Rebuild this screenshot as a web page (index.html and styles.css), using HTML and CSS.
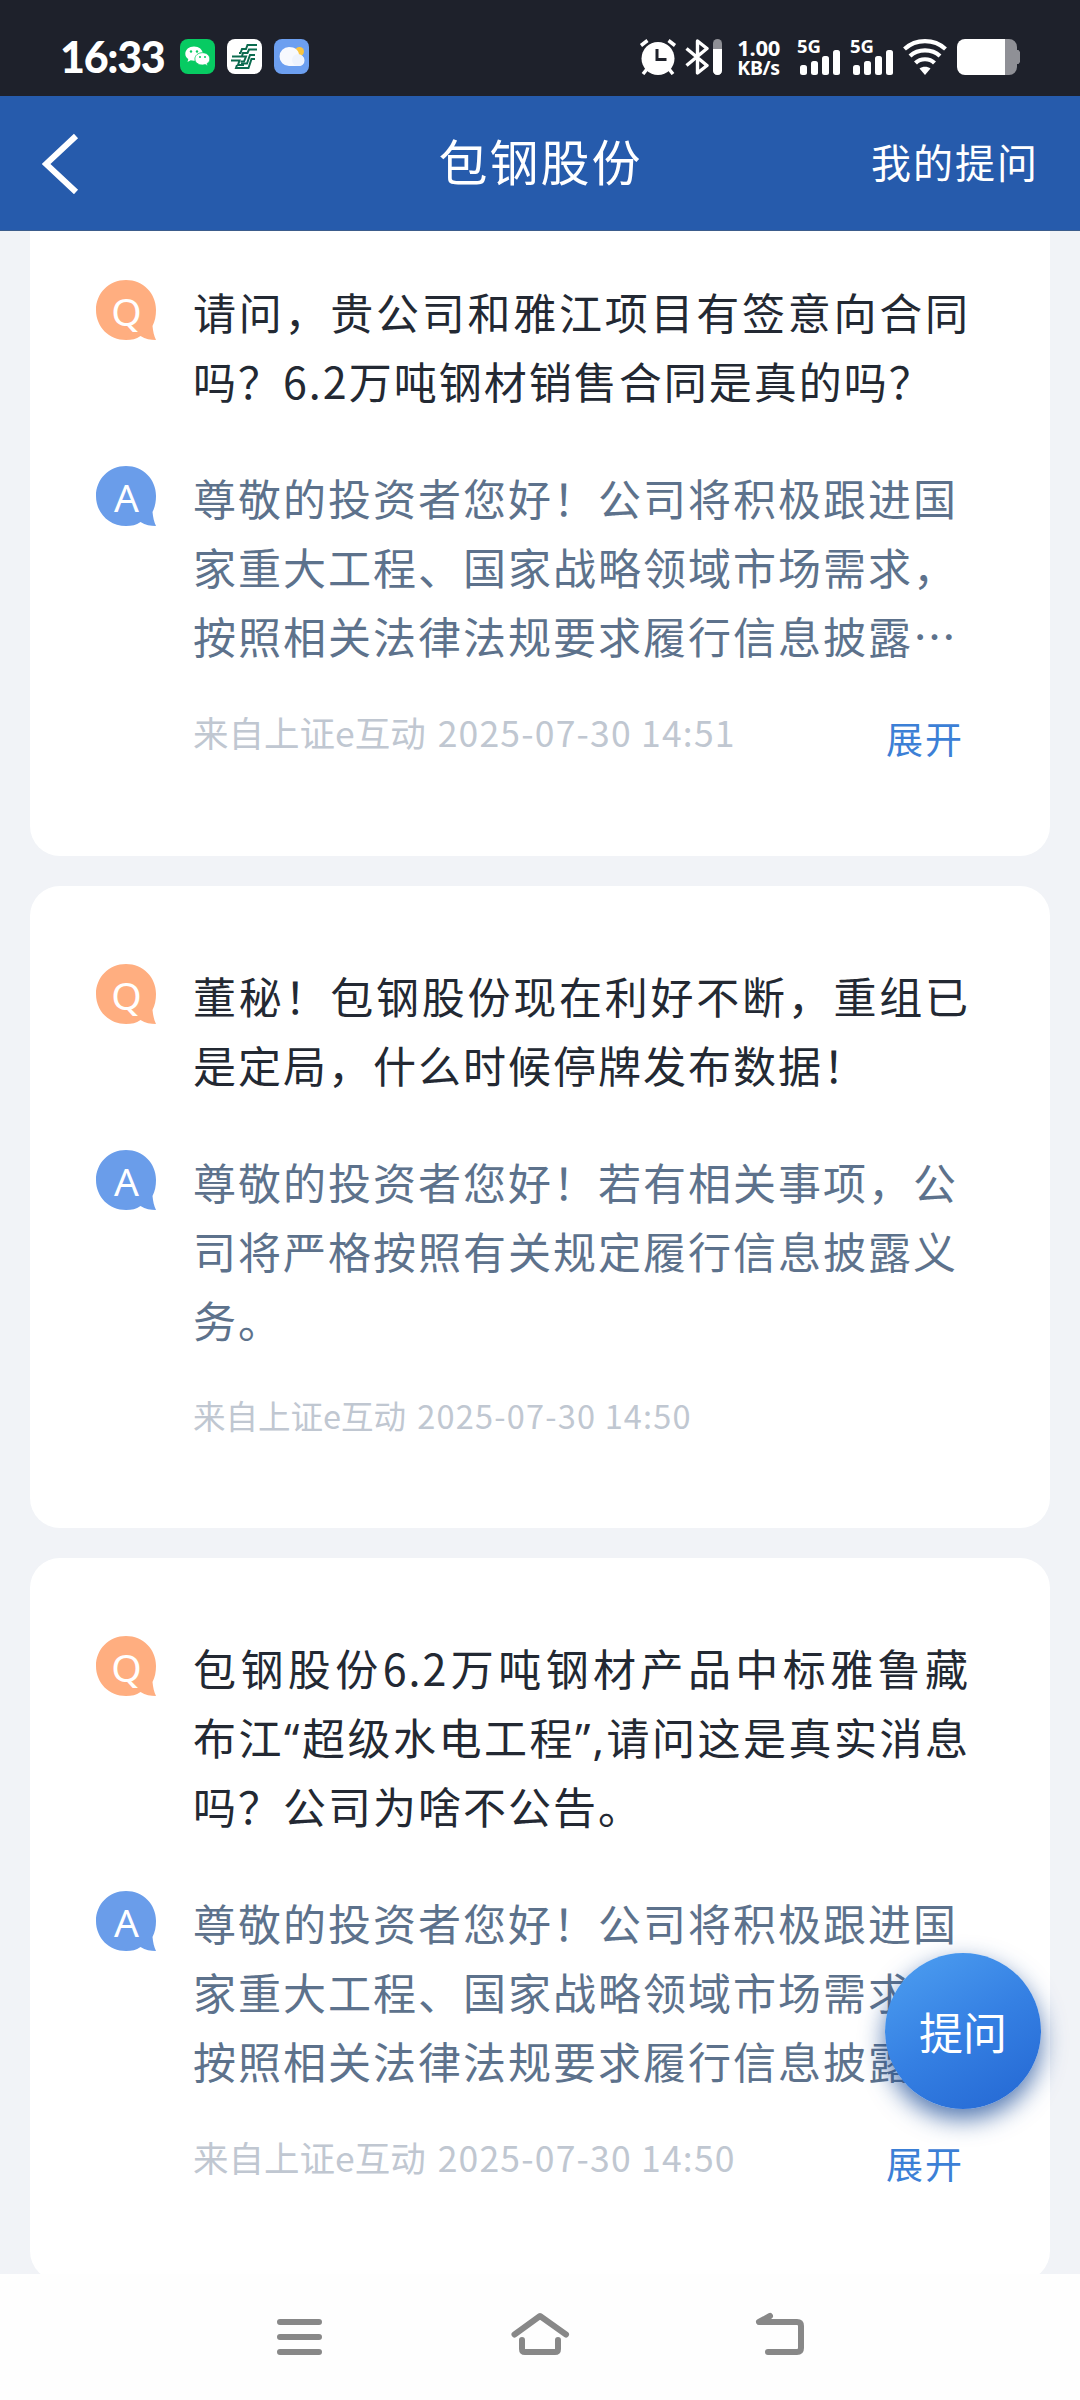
FILE: index.html
```html
<!DOCTYPE html>
<html lang="zh-CN">
<head>
  <meta charset="UTF-8" />
  <meta name="viewport" content="width=device-width, initial-scale=1.0" />
  <title>包钢股份</title>
  <link rel="stylesheet" href="styles.css">
</head>
<body>
  <svg width="0" height="0" class="defs">
    <symbol id="bubble" viewBox="0 0 60 60">
      <path d="M30 0C13 0 0 13 0 30s13 30 30 30c6 0 10-1 14.500-4 5 3 10 4 15.500 4-2-4-3-9-3.500-14 2.500-5 3.500-10 3.500-16C60 13 47 0 30 0z" fill="currentColor"/>
    </symbol>
  </svg>

  <div class="status">
    <span class="time">16:33</span>
    <div class="apps">
      <svg width="35" height="35" viewBox="0 0 35 35">
        <rect width="35" height="35" rx="8" fill="#07cb62"/>
        <path d="M14 7.500c-5 0-8.700 3.200-8.700 7.200 0 2.300 1.100 4.100 3 5.400l-.8 2.800 3.200-1.600c1 .3 2.100.4 3.300.4 5 0 8.800-3 8.800-7s-3.800-7.200-8.800-7.200z" fill="#fff"/>
        <path d="M22.500 13.700c-4.400 0-7.600 2.800-7.600 6.200s3.200 6.100 7.600 6.100c1 0 1.900-.1 2.700-.4l2.500 1.300-.6-2.300c1.700-1.100 2.700-2.700 2.700-4.700 0-3.400-3-6.200-7.300-6.200z" fill="#fff" stroke="#07cb62" stroke-width=".8"/>
        <g fill="#07cb62"><circle cx="11" cy="12.500" r="1.200"/><circle cx="17" cy="12.500" r="1.200"/><circle cx="20" cy="18" r="1"/><circle cx="25" cy="18" r="1"/></g>
      </svg>
      <svg width="35" height="35" viewBox="0 0 35 35">
        <rect width="35" height="35" rx="8" fill="#fff"/>
        <g fill="none" stroke="#0b6b4f" stroke-width="2">
          <path d="M30 6H20.500l-1.500 4h-4l-1.500 4H12"/>
          <path d="M30 10.500h-8L20.500 14H16l-1 3"/>
          <path d="M5 17.500h14l-2 5h-3.500"/>
          <path d="M28 16h-5l-3 8.500h-6"/>
          <path d="M28 20h-3.500l-3 9H9l1-3"/>
          <path d="M4 21.500h8.500L11 26h6"/>
        </g>
      </svg>
      <svg width="35" height="35" viewBox="0 0 35 35">
        <rect width="35" height="35" rx="8" fill="#6c9ff0"/>
        <circle cx="25.500" cy="12.500" r="4.500" fill="#f9c440"/>
        <path d="M15 8a9.500 9.500 0 1 0 0 19h10a5.500 5.500 0 0 0 0-11c0-4.500-4-8-10-8z" fill="#f7f9fe"/>
        <circle cx="24" cy="21" r="6" fill="#eef3fd"/>
      </svg>
    </div>

    <svg class="icon-alarm" width="38" height="36" viewBox="0 0 38 36">
      <circle cx="19" cy="19.500" r="16.500" fill="#fff"/>
      <path d="M2 6.500 8.500 1.500M36 6.500 29.500 1.500M8 30l-4 5M30 30l4 5" stroke="#fff" stroke-width="3.500"/>
      <path d="M18 10v10.500h9.500" fill="none" stroke="#1e212b" stroke-width="3"/>
    </svg>
    <svg class="icon-bt" width="37" height="36" viewBox="0 0 37 36">
      <path d="M1.500 9.500 22 26.500 12.500 34V2L22 9.500 1.500 26.500" fill="none" stroke="#fff" stroke-width="3.400" stroke-linejoin="round"/>
      <rect x="28" width="9" height="36" rx="4.500" fill="#8f9096"/>
      <path d="M28 10h9v21.500a4.500 4.500 0 0 1-9 0z" fill="#fff"/>
    </svg>
    <div class="speed"><span>1.00</span><span>KB/s</span></div>
    <div class="signal">
      <span>5G</span>
      <svg width="41" height="36" viewBox="0 0 41 36" fill="#fff"><rect y="26" width="7" height="10" rx="2.500"/><rect x="11" y="22" width="7" height="14" rx="2.500"/><rect x="22" y="17" width="7" height="19" rx="2.500"/><rect x="33" y="11" width="7" height="25" rx="2.500"/></svg>
    </div>
    <div class="signal">
      <span>5G</span>
      <svg width="41" height="36" viewBox="0 0 41 36" fill="#fff"><rect y="26" width="7" height="10" rx="2.500"/><rect x="11" y="22" width="7" height="14" rx="2.500"/><rect x="22" y="17" width="7" height="19" rx="2.500"/><rect x="33" y="11" width="7" height="25" rx="2.500"/></svg>
    </div>
    <svg class="icon-wifi" width="44" height="36" viewBox="0 0 44 36">
      <g fill="none" stroke="#fff" stroke-width="4.200"><path d="M1.500 10C13-.500 31-.500 42.500 10"/><path d="M7 17c8-7.500 22-7.500 30 0"/><path d="M12.500 24c5-5 14-5 19 0"/></g>
      <path d="M16.500 29.500c3-2.500 8-2.500 11 0L22 36z" fill="#fff"/>
    </svg>
    <svg class="icon-battery" width="63" height="36" viewBox="0 0 63 36">
      <path d="M48 0h4a8 8 0 0 1 8 8v3h1.500l1.500 2v10l-1.500 2H60v3a8 8 0 0 1-8 8h-4z" fill="#8f9096"/>
      <path d="M8 0h40v36H8a8 8 0 0 1-8-8V8a8 8 0 0 1 8-8z" fill="#fff"/>
    </svg>
  </div>

  <div class="header">
    <svg class="back" width="38" height="62" viewBox="0 0 38 62"><path d="M34 4 4 32l30 28" fill="none" stroke="#fff" stroke-width="6"/></svg>
    <h1>包钢股份</h1>
    <a class="mine">我的提问</a>
  </div>

  <div class="list">
    <div class="card first">
      <div class="row question">
        <div class="avatar q"><svg><use href="#bubble"/></svg><span>Q</span></div>
        <div class="text">
          <p class="full">请问，贵公司和雅江项目有签意向合同</p>
          <p>吗？6.2万吨钢材销售合同是真的吗？</p>
        </div>
      </div>
      <div class="row answer">
        <div class="avatar a"><svg><use href="#bubble"/></svg><span>A</span></div>
        <div class="text">
          <p>尊敬的投资者您好！公司将积极跟进国</p>
          <p>家重大工程、国家战略领域市场需求，</p>
          <p>按照相关法律法规要求履行信息披露…</p>
        </div>
      </div>
      <div class="foot">
        <span class="source">来自上证e互动 <span class="date">2025-07-30 14:51</span></span>
        <a class="expand">展开</a>
      </div>
    </div>

    <div class="card">
      <div class="row question">
        <div class="avatar q"><svg><use href="#bubble"/></svg><span>Q</span></div>
        <div class="text">
          <p class="full">董秘！包钢股份现在利好不断，重组已</p>
          <p>是定局，什么时候停牌发布数据！</p>
        </div>
      </div>
      <div class="row answer">
        <div class="avatar a"><svg><use href="#bubble"/></svg><span>A</span></div>
        <div class="text">
          <p>尊敬的投资者您好！若有相关事项，公</p>
          <p>司将严格按照有关规定履行信息披露义</p>
          <p>务。</p>
        </div>
      </div>
      <div class="foot small">
        <span class="source">来自上证e互动 <span class="date">2025-07-30 14:50</span></span>
      </div>
    </div>

    <div class="card">
      <div class="row question">
        <div class="avatar q"><svg><use href="#bubble"/></svg><span>Q</span></div>
        <div class="text">
          <p class="full">包钢股份6.2万吨钢材产品中标雅鲁藏</p>
          <p class="full">布江<span class="quote">“</span>超级水电工程<span class="quote">”,</span>请问这是真实消息</p>
          <p>吗？公司为啥不公告。</p>
        </div>
      </div>
      <div class="row answer">
        <div class="avatar a"><svg><use href="#bubble"/></svg><span>A</span></div>
        <div class="text">
          <p>尊敬的投资者您好！公司将积极跟进国</p>
          <p>家重大工程、国家战略领域市场需求，</p>
          <p>按照相关法律法规要求履行信息披露…</p>
        </div>
      </div>
      <div class="foot">
        <span class="source">来自上证e互动 <span class="date">2025-07-30 14:50</span></span>
        <a class="expand">展开</a>
      </div>
    </div>
  </div>

  <button class="ask">提问</button>

  <div class="navbar">
    <svg width="60" height="48" viewBox="0 0 60 48"><path d="M10 11h39M10 26h39M10 41h39" stroke="#888" stroke-width="6" stroke-linecap="round"/></svg>
    <svg width="60" height="48" viewBox="0 0 60 48" fill="none" stroke="#888" stroke-width="6" stroke-linecap="round" stroke-linejoin="round"><path d="M4.500 23.500 30 5l26 18.500"/><path d="M12 29v9q0 3 3 3h30q3 0 3-3v-9"/></svg>
    <svg width="60" height="48" viewBox="0 0 60 48" fill="none" stroke="#888" stroke-width="6" stroke-linecap="round" stroke-linejoin="round"><path d="M20 5 9 11h38q4 0 4 4v22q0 4-4 4H18"/></svg>
  </div>
</body>
</html>
```
FILE: styles.css
```css
* {
  box-sizing: border-box;
}
body {
  margin: 0;
  height: 2400px;
  display: flex;
  flex-direction: column;
  overflow: hidden;
  position: relative;
  background-color: #f1f3f7;
  font-family: "Noto Sans CJK SC", sans-serif;
}
h1, p {
  margin: 0;
  font-weight: normal;
}
.defs {
  position: absolute;
}

/* status bar */
.status {
  flex: none;
  height: 96px;
  padding: 39px 60px 0 60px;
  display: flex;
  align-items: flex-start;
  background-color: #1e212b;
  color: #fff;
}
.status svg {
  flex: none;
  display: block;
}
.time {
  width: 121px;
  font: 900 43px/36px Lato, sans-serif;
  letter-spacing: -1.3px;
}
.apps {
  display: flex;
  gap: 12px;
  margin-right: 330px;
}
.icon-bt {
  margin-left: 8px;
}
.speed {
  width: 44px;
  margin-left: 15px;
  display: flex;
  flex-direction: column;
  font: bold 22px/17px "Noto Sans", sans-serif;
  letter-spacing: -0.3px;
}
.speed span + span {
  font-size: 19.5px;
  line-height: 23px;
}
.signal {
  position: relative;
  width: 41px;
  margin-left: 19px;
}
.signal + .signal {
  margin-left: 12px;
}
.signal span {
  position: absolute;
  left: -3px;
  top: -2px;
  font: bold 18.5px/18px "Noto Sans", sans-serif;
}
.icon-wifi {
  margin-left: 9px;
}
.icon-battery {
  margin-left: 10px;
}

/* header */
.header {
  flex: none;
  height: 135px;
  padding: 0 41px 0 42px;
  display: grid;
  grid-template-columns: 1fr auto 1fr;
  align-items: center;
  background-color: #265bac;
  border-bottom: 1px solid #3b5c8c;
  color: #fff;
}
.header h1 {
  font-size: 49px;
  line-height: 60px;
  letter-spacing: 2px;
  padding-bottom: 7px;
}
.mine {
  justify-self: end;
  font-size: 40px;
  line-height: 50px;
  letter-spacing: 2px;
  padding-bottom: 5px;
}

/* q&a list */
.list {
  flex: 1;
  min-height: 0;
  overflow: hidden;
  padding: 0 30px;
}
.card {
  margin-bottom: 30px;
  padding: 75px 66px 0;
  border-radius: 30px;
  background-color: #fff;
}
.first {
  margin-top: -29px;
}
.row {
  display: flex;
}
.question {
  margin-bottom: 48px;
  color: #232933;
}
.answer {
  color: #5d728c;
}
.avatar {
  flex: none;
  position: relative;
  width: 60px;
  height: 60px;
  margin: 3px 37px 0 0;
}
.avatar svg {
  display: block;
  width: 60px;
  height: 60px;
}
.avatar span {
  position: absolute;
  inset: 0;
  padding-left: 1px;
  text-align: center;
  color: #fff;
  font: 39px/61px "Noto Sans", sans-serif;
}
.q {
  color: #ffae80;
}
.a {
  color: #6a9dea;
}
.text {
  width: 777px;
  font-size: 43px;
  line-height: 69px;
  letter-spacing: 2px;
  white-space: nowrap;
}
.full {
  text-align-last: justify;
  text-justify: inter-character;
}
.quote {
  font-family: "Noto Sans", sans-serif;
  line-height: 1;
}
.foot {
  height: 154px;
  margin-top: 32px;
  padding: 0 20px 0 97px;
  display: flex;
  justify-content: space-between;
  align-items: flex-start;
  color: #c0c7d1;
  font-size: 35.5px;
  line-height: 60px;
}
.small {
  height: 143px;
  margin-top: 31px;
  font-size: 32.5px;
}
.date {
  margin-left: 4px;
  letter-spacing: 1.2px;
}
.expand {
  padding-top: 6px;
  color: #3c80d6;
  font-size: 37px;
  letter-spacing: 2px;
}

.ask {
  position: absolute;
  left: 885px;
  top: 1953px;
  width: 156px;
  height: 156px;
  padding: 0;
  border: none;
  border-radius: 50%;
  background: linear-gradient(150deg, #4c9df0 5%, #3580e3 50%, #2366d2 100%);
  box-shadow: 0 10px 24px rgba(24, 74, 150, 0.75);
  color: #fff;
  font: 44px "Noto Sans CJK SC", sans-serif;
}

/* system navigation */
.navbar {
  flex: none;
  height: 126px;
  padding: 37px 270px 0;
  display: flex;
  justify-content: space-between;
  background-color: #fefefe;
}
```
